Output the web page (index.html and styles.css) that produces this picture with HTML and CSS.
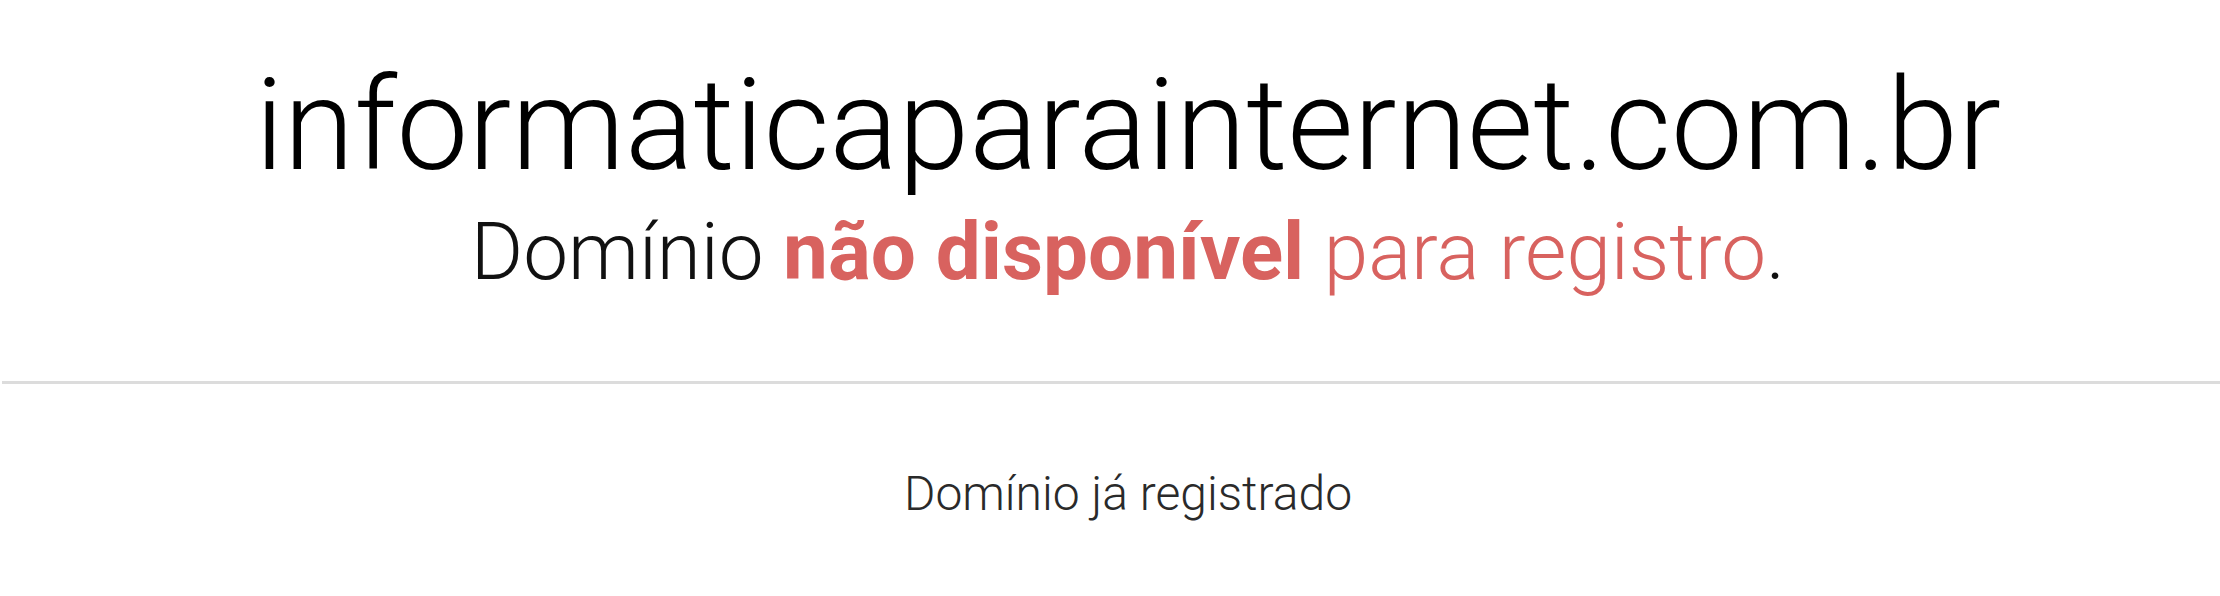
FILE: index.html
```html
<!DOCTYPE html>
<html lang="pt-BR">
<head>
<meta charset="utf-8">
<title>informaticaparainternet.com.br</title>
<link rel="stylesheet" href="styles.css">
</head>
<body>
<header class="hero">
  <h1 class="domain">informaticaparainternet.com.br</h1>
  <p class="status">Domínio <strong class="unavail">não disponível</strong> <span class="rest">para registro</span>.</p>
</header>
<hr class="divider">
<main class="info">
  <p class="note">Domínio já registrado</p>
</main>
</body>
</html>
```
FILE: styles.css
```css
html, body {
  margin: 0;
  padding: 0;
  background: #fff;
}
body {
  font-family: Roboto, "Liberation Sans", sans-serif;
  color: #000;
}
.hero {
  text-align: center;
  padding: 50px 0 0 36px;
}
.domain {
  margin: 0;
  font-size: 128px;
  font-weight: 300;
  line-height: 150px;
  color: #000;
}
.status {
  margin: 0;
  font-size: 80px;
  font-weight: 300;
  line-height: 104px;
  color: #111;
}
.unavail {
  font-weight: 700;
  color: #d8625f;
}
.rest {
  color: #d8625f;
}
.divider {
  margin: 77px 0 0 2px;
  border: 0;
  height: 3px;
  background: #dcdcdc;
}
.info {
  text-align: center;
  padding: 81px 0 0 36px;
}
.note {
  margin: 0;
  font-size: 48px;
  font-weight: 300;
  color: #2a2a2a;
}
```
